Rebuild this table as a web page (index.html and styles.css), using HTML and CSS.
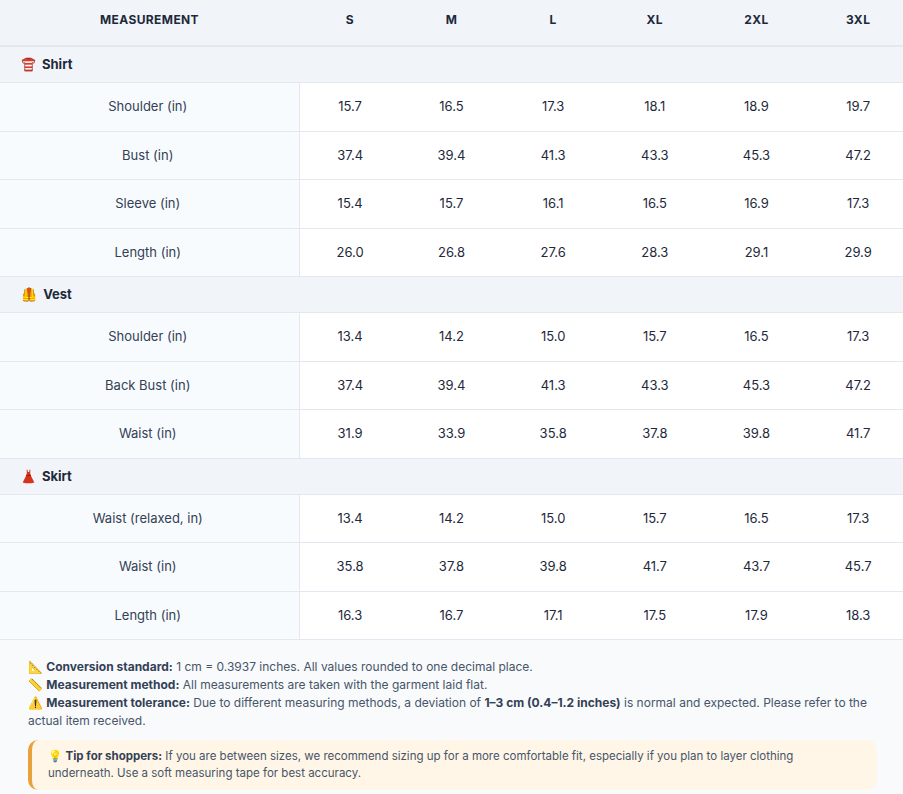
FILE: index.html
```html
<!DOCTYPE html>
<html lang="en">
<head>
<meta charset="utf-8">
<title>Size Chart</title>
<link rel="stylesheet" href="styles.css">
</head>
<body>
<div class="chart">
  <div class="table-wrap">
  <table class="size-table">
    <colgroup>
      <col class="col-label">
      <col class="col-size"><col class="col-size"><col class="col-size"><col class="col-size"><col class="col-size"><col class="col-size">
    </colgroup>
    <thead>
      <tr>
        <th>Measurement</th><th>S</th><th>M</th><th>L</th><th>XL</th><th>2XL</th><th>3XL</th>
      </tr>
    </thead>
    <tbody>
      <tr class="cat"><td colspan="7"><div class="cat-inner"><svg class="cat-icon" viewBox="0 0 16 16" aria-hidden="true"><defs><clipPath id="shirtclip"><path d="M5.4 1.2 L1.2 3.4 L2.2 6.6 L4 6 L4 15 L12 15 L12 6 L13.8 6.6 L14.8 3.4 L10.6 1.2 Z"/></clipPath></defs><path d="M5.4 1.2 L1.2 3.4 L2.2 6.6 L4 6 L4 15 L12 15 L12 6 L13.8 6.6 L14.8 3.4 L10.6 1.2 Z" fill="#de3b2c"/><g clip-path="url(#shirtclip)" fill="#ffffff"><rect x="0" y="4.6" width="16" height="1.7"/><rect x="3.5" y="8.2" width="9" height="1.8"/><rect x="3.5" y="11.8" width="9" height="1.6"/></g><path d="M5.4 1.2 L1.2 3.4 L2.2 6.6 L4 6 L4 15 L12 15 L12 6 L13.8 6.6 L14.8 3.4 L10.6 1.2 Z" fill="none" stroke="#8a2417" stroke-width="0.7" stroke-linejoin="round"/><path d="M5.4 1.2 Q8 3.6 10.6 1.2" fill="#8a2417"/></svg><span>Shirt</span></div></td></tr>
      <tr><td class="label">Shoulder (in)</td><td>15.7</td><td>16.5</td><td>17.3</td><td>18.1</td><td>18.9</td><td>19.7</td></tr>
      <tr><td class="label">Bust (in)</td><td>37.4</td><td>39.4</td><td>41.3</td><td>43.3</td><td>45.3</td><td>47.2</td></tr>
      <tr><td class="label">Sleeve (in)</td><td>15.4</td><td>15.7</td><td>16.1</td><td>16.5</td><td>16.9</td><td>17.3</td></tr>
      <tr><td class="label">Length (in)</td><td>26.0</td><td>26.8</td><td>27.6</td><td>28.3</td><td>29.1</td><td>29.9</td></tr>
      <tr class="cat"><td colspan="7"><div class="cat-inner"><span class="emoji cat-emoji">🦺</span><span>Vest</span></div></td></tr>
      <tr><td class="label">Shoulder (in)</td><td>13.4</td><td>14.2</td><td>15.0</td><td>15.7</td><td>16.5</td><td>17.3</td></tr>
      <tr><td class="label">Back Bust (in)</td><td>37.4</td><td>39.4</td><td>41.3</td><td>43.3</td><td>45.3</td><td>47.2</td></tr>
      <tr><td class="label">Waist (in)</td><td>31.9</td><td>33.9</td><td>35.8</td><td>37.8</td><td>39.8</td><td>41.7</td></tr>
      <tr class="cat"><td colspan="7"><div class="cat-inner"><svg class="cat-icon" viewBox="0 0 16 16" aria-hidden="true"><path d="M6 0.8 L6.2 4.4 L5.4 7.2 L1.8 14.4 Q8 16.2 14.2 14.4 L10.6 7.2 L9.8 4.4 L10 0.8 L9 0.8 L8.8 3.2 L7.2 3.2 L7 0.8 Z" fill="#d8321f"/><rect x="5.5" y="6.3" width="5" height="1.3" fill="#9c1c10"/></svg><span>Skirt</span></div></td></tr>
      <tr><td class="label">Waist (relaxed, in)</td><td>13.4</td><td>14.2</td><td>15.0</td><td>15.7</td><td>16.5</td><td>17.3</td></tr>
      <tr><td class="label">Waist (in)</td><td>35.8</td><td>37.8</td><td>39.8</td><td>41.7</td><td>43.7</td><td>45.7</td></tr>
      <tr><td class="label">Length (in)</td><td>16.3</td><td>16.7</td><td>17.1</td><td>17.5</td><td>17.9</td><td>18.3</td></tr>
    </tbody>
  </table>
  </div>
  <div class="notes">
    <p class="note-text">
      <span class="emoji">📐</span> <strong>Conversion standard:</strong> 1 cm = 0.3937 inches. All values rounded to one decimal place.<br>
      <span class="emoji">📏</span> <strong>Measurement method:</strong> All measurements are taken with the garment laid flat.<br>
      <span class="emoji">⚠️</span> <strong>Measurement tolerance:</strong> Due to different measuring methods, a deviation of <strong>1–3 cm (0.4–1.2 inches)</strong> is normal and expected. Please refer to the actual item received.
    </p>
    <div class="tip">
      <span class="emoji">💡</span> <strong>Tip for shoppers:</strong> If you are between sizes, we recommend sizing up for a more comfortable fit, especially if you plan to layer clothing underneath. Use a soft measuring tape for best accuracy.
    </div>
  </div>
</div>
</body>
</html>
```

FILE: styles.css
```css
html, body {
  margin: 0;
  padding: 0;
  background: #ffffff;
}

body {
  font-family: Inter, "Noto Sans", "Liberation Sans", sans-serif;
  color: #1e293b;
}

.emoji {
  font-family: "Noto Color Emoji", "Apple Color Emoji", "Segoe UI Emoji", sans-serif;
  font-weight: normal;
}

.table-wrap {
  width: 903px;
  overflow: hidden;
}

.size-table {
  width: 909px;
  border-collapse: collapse;
  table-layout: fixed;
  font-size: 13px;
}

.col-label {
  width: 299px;
}

.col-size {
  width: 101.66px;
}

.size-table th {
  background: #f1f5f9;
  font-size: 12px;
  font-weight: 700;
  text-transform: uppercase;
  letter-spacing: 0.4px;
  color: #1e293b;
  padding: 11px 8px 17px;
  line-height: 17px;
  text-align: center;
  border-bottom: 2px solid #e2e8f0;
}

.size-table td {
  text-align: center;
  padding: 15px 8px;
  height: 17.5px;
  line-height: 17.5px;
  border-bottom: 1px solid #e2e8f0;
  color: #1e293b;
  background: #ffffff;
}

.size-table td.label {
  background: #f8fbfe;
  color: #334155;
  border-right: 1px solid #e2e8f0;
  padding-right: 11px;
}

.size-table tr.cat td {
  background: #f1f5f9;
  text-align: left;
  padding: 9px 21px;
  height: 17px;
  font-weight: 700;
  line-height: 17px;
  color: #1e293b;
}

.cat-inner {
  display: flex;
  align-items: center;
  gap: 6px;
  height: 17px;
}

.cat-icon {
  width: 15px;
  height: 15px;
  display: block;
  flex: none;
}

.cat-emoji {
  font-size: 13px;
  line-height: 15px;
}

.notes {
  background: #f8fafc;
  padding: 18px 26px 12px 28px;
  font-size: 12px;
  color: #475569;
}

.note-text {
  margin: 0 0 10px 0;
  line-height: 18px;
}

.notes strong {
  color: #334155;
  font-weight: 700;
}

.tip {
  background: #fff6e7;
  border-left: 4px solid #e9a23b;
  border-radius: 10px;
  padding: 8px 16px;
  line-height: 17px;
  font-size: 11.5px;
}
```
